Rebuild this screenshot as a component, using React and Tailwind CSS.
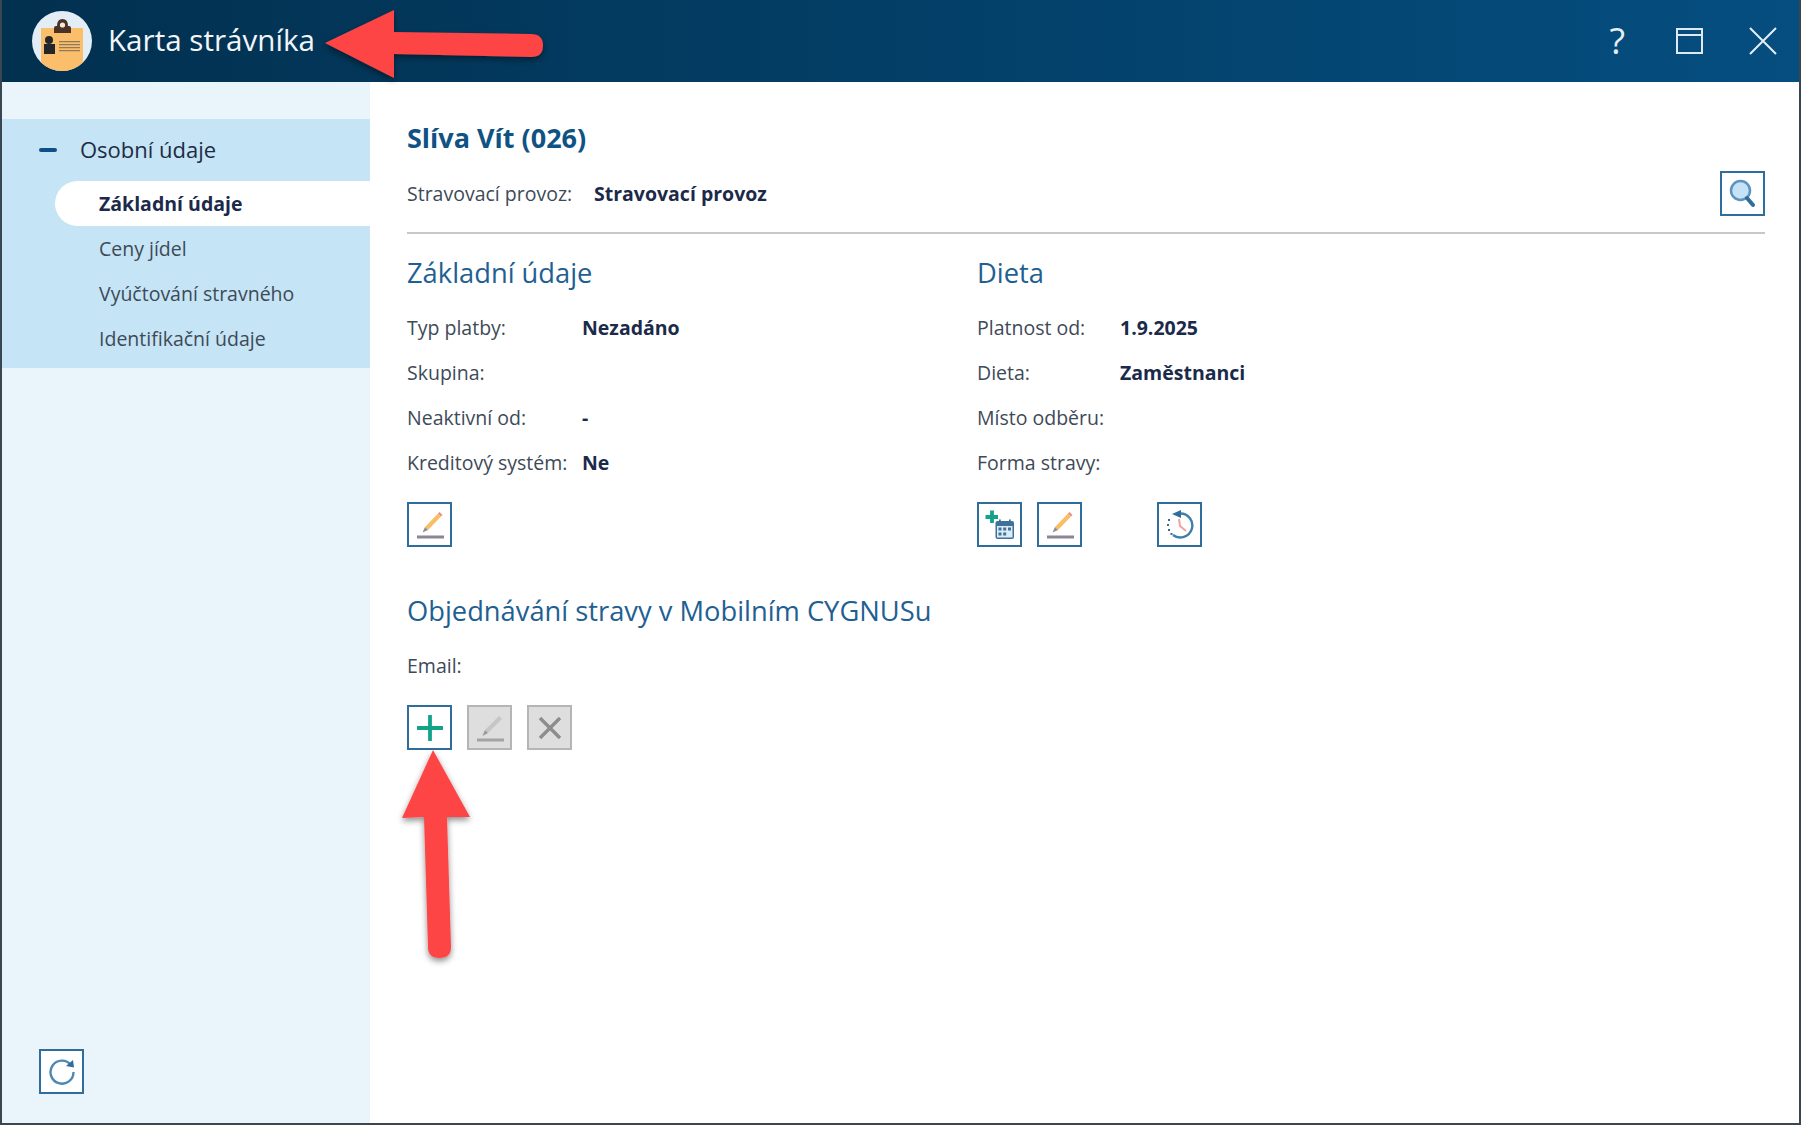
import React from 'react';

const PencilIcon = () => (
    <svg width="30" height="30" viewBox="0 0 30 30">
        <path d="M10 17 L23 3.5 L26 6.5 L13 20 Z" fill="#f9bd63" />
        <path d="M23 3.5 L24.5 2 L27.5 5 L26 6.5 Z" fill="#ef8a80" />
        <path d="M10 17 L7.5 22.5 L13 20 Z" fill="#8d8f96" />
        <rect x="2" y="25.5" width="27" height="3" fill="#8d8494" />
    </svg>
);

const GreyPencilIcon = () => (
    <svg width="30" height="30" viewBox="0 0 30 30">
        <path d="M10 17 L24 3 L27 6 L13 20 Z" fill="#c6c6c6" />
        <path d="M10 17 L7.5 23 L13 20 Z" fill="#9a9a9a" />
        <rect x="2" y="25.5" width="27" height="3" fill="#a3a3a3" />
    </svg>
);

const SearchIcon = () => (
    <svg width="28" height="30" viewBox="0 0 28 30">
        <circle cx="11.5" cy="11.5" r="9.5" fill="#c5e3f6" stroke="#5f93bd" strokeWidth="2.5" />
        <path d="M18 19 L24 26" stroke="#2f6d9c" strokeWidth="4" strokeLinecap="round" />
    </svg>
);

const CalendarPlusIcon = () => (
    <svg width="36" height="36" viewBox="0 0 36 36">
        <path d="M10 3.5 V16 M3.5 10 H16" stroke="#12a38a" strokeWidth="3.8" />
        <rect x="13.5" y="14" width="18.5" height="18" rx="2" fill="#3f7199" />
        <rect x="17" y="12.5" width="1.8" height="4" fill="#3f7199" />
        <rect x="27" y="12.5" width="1.8" height="4" fill="#3f7199" />
        <rect x="15" y="19" width="15.5" height="11.5" fill="#dcecf7" />
        <path d="M16.5 20.5h3v3h-3zM21.2 20.5h3v3h-3zM26 20.5h3v3h-3zM16.5 25.5h3v3h-3zM21.2 25.5h3v3h-3z" fill="#3f7199" />
    </svg>
);

const HistoryIcon = () => (
    <svg width="30" height="30" viewBox="0 0 30 30">
        <path d="M15 3.5 A12 12 0 1 1 8 25" fill="none" stroke="#3f7fab" strokeWidth="2.4" />
        <path d="M16 0 L16 8 L7 4 Z" fill="#2f6d9c" />
        <path d="M3 9h2v2H3zM2 14h2v2H2zM3 19h2v2H3zM5.5 23h2v2h-2z" fill="#2f6d9c" />
        <path d="M14 9 L15 16 L21 21" fill="none" stroke="#f2a0a0" strokeWidth="2" />
    </svg>
);

const PlusIcon = () => (
    <svg width="26" height="26" viewBox="0 0 26 26">
        <path d="M13 1 V25 M1 13 H25" stroke="#12a38a" strokeWidth="3.8" strokeLinecap="round" />
    </svg>
);

const CrossIcon = () => (
    <svg width="24" height="24" viewBox="0 0 24 24">
        <path d="M2 2 L22 22 M22 2 L2 22" stroke="#8d8d8d" strokeWidth="3.4" />
    </svg>
);

const RefreshIcon = () => (
    <svg width="28" height="28" viewBox="0 0 28 28">
        <path d="M23 7 A11.5 11.5 0 1 0 25.5 14" fill="none" stroke="#4d88b3" strokeWidth="2.4" />
        <path d="M18 8 L26 9.5 L25 2 Z" fill="#2f6d9c" />
    </svg>
);

const CardLogo = () => (
    <svg width="60" height="60" viewBox="0 0 60 60">
        <defs>
            <clipPath id="logoCircle">
                <circle cx="30" cy="30" r="30" />
            </clipPath>
        </defs>
        <circle cx="30" cy="30" r="30" fill="#e2edf6" />
        <g clipPath="url(#logoCircle)">
            <rect x="9" y="17" width="42" height="43" fill="#fbbe6b" />
        </g>
        <path d="M22 22 V17 Q22 15 24 15 H25 Q25 8 30.5 8 Q36 8 36 15 H37 Q39 15 39 17 V22 Z" fill="#4a3226" />
        <circle cx="30.5" cy="14" r="2.6" fill="#f4ead8" />
        <circle cx="17" cy="29" r="4" fill="#23272c" />
        <path d="M12 33 H23 V43 H12 Z" fill="#23272c" />
        <path d="M27 30h21v1.2H27zM27 33h21v1.2H27zM27 36h21v1.2H27zM27 39h21v1.2H27z" fill="#8f7a5c" />
    </svg>
);

const IconButton = ({ children, disabled }) => (
    <button
        className={
            disabled
                ? 'w-[45px] h-[45px] flex items-center justify-center border-2 border-[#b5b5b5] bg-[#dedede]'
                : 'w-[45px] h-[45px] flex items-center justify-center border-2 border-[#2f6d9c] bg-white'
        }
    >
        {children}
    </button>
);

const Field = ({ label, value, labelWidth }) => (
    <div className="flex items-center h-[45px] text-[19.5px]">
        <span className={`${labelWidth} text-[#3d4a57]`}>{label}</span>
        <span className="font-bold text-[#1b2a4a]">{value}</span>
    </div>
);

const SectionTitle = ({ children }) => (
    <h2 className="text-[27.3px] leading-[36px] text-[#1f6092]">{children}</h2>
);

// red callout arrows lying over the window
const Arrows = () => (
    <svg className="absolute inset-0 pointer-events-none" width="1801" height="1125" viewBox="0 0 1801 1125">
        <defs>
            <filter id="arrowShadow" x="-20%" y="-20%" width="140%" height="140%">
                <feDropShadow dx="0" dy="3" stdDeviation="3" floodColor="#000" floodOpacity="0.45" />
            </filter>
        </defs>
        <g filter="url(#arrowShadow)" fill="#fe4444">
            <path d="M325 43 L394 10 L394 32 L531 34 Q543 34 543 45.5 Q543 57 531 57 L394 54 L394 78 Z" />
            <path d="M433 750 L470 817 L447 817 L451 947 Q451 958 439.5 958 Q428 958 428 947 L424 817 L402 818 Z" />
        </g>
    </svg>
);

const App = () => {
    return (
        <div className="relative w-[1801px] h-[1125px] overflow-hidden bg-white font-['Open_Sans',sans-serif]">
            <div className="w-full h-full flex flex-col border-l-2 border-r-2 border-b-2 border-[#3a4650]">
                {/* Title bar */}
                <header className="h-[82px] shrink-0 flex items-center bg-gradient-to-r from-[#02304f] to-[#054e80] pl-[30px] pr-[22px] text-white">
                    <CardLogo />
                    <h1 className="ml-[16px] mb-[2px] text-[29.6px] font-normal text-[#f2f6f9]">Karta strávníka</h1>
                    <div className="ml-auto flex items-center">
                        <span className="text-[36px] leading-none text-[#e6eef4]">?</span>
                        <svg className="ml-[51px]" width="27" height="26" viewBox="0 0 27 26" fill="none" stroke="#e0e9f0" strokeWidth="2">
                            <rect x="1" y="1" width="25" height="24" />
                            <path d="M1 7 H26" />
                        </svg>
                        <svg className="ml-[46px]" width="28" height="28" viewBox="0 0 28 28" fill="none" stroke="#e6eef4" strokeWidth="2">
                            <path d="M1 1 L27 27 M27 1 L1 27" />
                        </svg>
                    </div>
                </header>

                <div className="flex flex-1 min-h-0">
                    {/* Sidebar */}
                    <aside className="w-[368px] shrink-0 flex flex-col bg-[#e9f5fb] pt-[37px] pb-[29px]">
                        <nav className="bg-[#c5e4f5] h-[249px] text-[19.5px] text-[#3d4a57]">
                            <div className="h-[62px] flex items-center pl-[37px]">
                                <span className="w-[18px] h-[4px] rounded-sm bg-[#104e86]" />
                                <span className="ml-[23px] mb-[1px] text-[22px] text-[#1e2b44]">Osobní údaje</span>
                            </div>
                            <div className="ml-[53px] h-[45px] flex items-center pl-[44px] rounded-l-full bg-white font-bold text-[#1b2a4a]">
                                Základní údaje
                            </div>
                            <div className="pl-[97px] h-[45px] flex items-center">Ceny jídel</div>
                            <div className="pl-[97px] h-[45px] flex items-center">Vyúčtování stravného</div>
                            <div className="pl-[97px] h-[45px] flex items-center">Identifikační údaje</div>
                        </nav>
                        <div className="mt-auto pl-[37px]">
                            <IconButton><RefreshIcon /></IconButton>
                        </div>
                    </aside>

                    {/* Content */}
                    <main className="flex-1 min-w-0 pl-[37px] pr-[34px] pt-[35px]">
                        <h1 className="text-[27px] leading-[42px] font-bold text-[#0f5284]">Slíva Vít (026)</h1>
                        <div className="flex items-center justify-between h-[45px] mt-[12px] text-[19.5px]">
                            <div className="flex items-center">
                                <span className="w-[187px] text-[#3d4a57]">Stravovací provoz:</span>
                                <span className="font-bold text-[#1b2a4a]">Stravovací provoz</span>
                            </div>
                            <IconButton><SearchIcon /></IconButton>
                        </div>
                        <div className="h-[2px] mt-[16px] bg-[#c8c8c8]" />

                        <div className="flex mt-[21px]">
                            <section className="w-[570px]">
                                <SectionTitle>Základní údaje</SectionTitle>
                                <div className="mt-[14px]">
                                    <Field label="Typ platby:" value="Nezadáno" labelWidth="w-[175px]" />
                                    <Field label="Skupina:" value="" labelWidth="w-[175px]" />
                                    <Field label="Neaktivní od:" value="-" labelWidth="w-[175px]" />
                                    <Field label="Kreditový systém:" value="Ne" labelWidth="w-[175px]" />
                                </div>
                                <div className="flex mt-[17px]">
                                    <IconButton><PencilIcon /></IconButton>
                                </div>
                            </section>
                            <section>
                                <SectionTitle>Dieta</SectionTitle>
                                <div className="mt-[14px]">
                                    <Field label="Platnost od:" value="1.9.2025" labelWidth="w-[143px]" />
                                    <Field label="Dieta:" value="Zaměstnanci" labelWidth="w-[143px]" />
                                    <Field label="Místo odběru:" value="" labelWidth="w-[143px]" />
                                    <Field label="Forma stravy:" value="" labelWidth="w-[143px]" />
                                </div>
                                <div className="flex gap-[15px] mt-[17px]">
                                    <IconButton><CalendarPlusIcon /></IconButton>
                                    <IconButton><PencilIcon /></IconButton>
                                    <div className="ml-[60px]">
                                        <IconButton><HistoryIcon /></IconButton>
                                    </div>
                                </div>
                            </section>
                        </div>

                        <section className="mt-[46px]">
                            <SectionTitle>Objednávání stravy v Mobilním CYGNUSu</SectionTitle>
                            <div className="mt-[14px]">
                                <Field label="Email:" value="" labelWidth="w-[175px]" />
                            </div>
                            <div className="flex gap-[15px] mt-[17px]">
                                <IconButton><PlusIcon /></IconButton>
                                <IconButton disabled><GreyPencilIcon /></IconButton>
                                <IconButton disabled><CrossIcon /></IconButton>
                            </div>
                        </section>
                    </main>
                </div>
            </div>
            <Arrows />
        </div>
    );
};

export default App;
